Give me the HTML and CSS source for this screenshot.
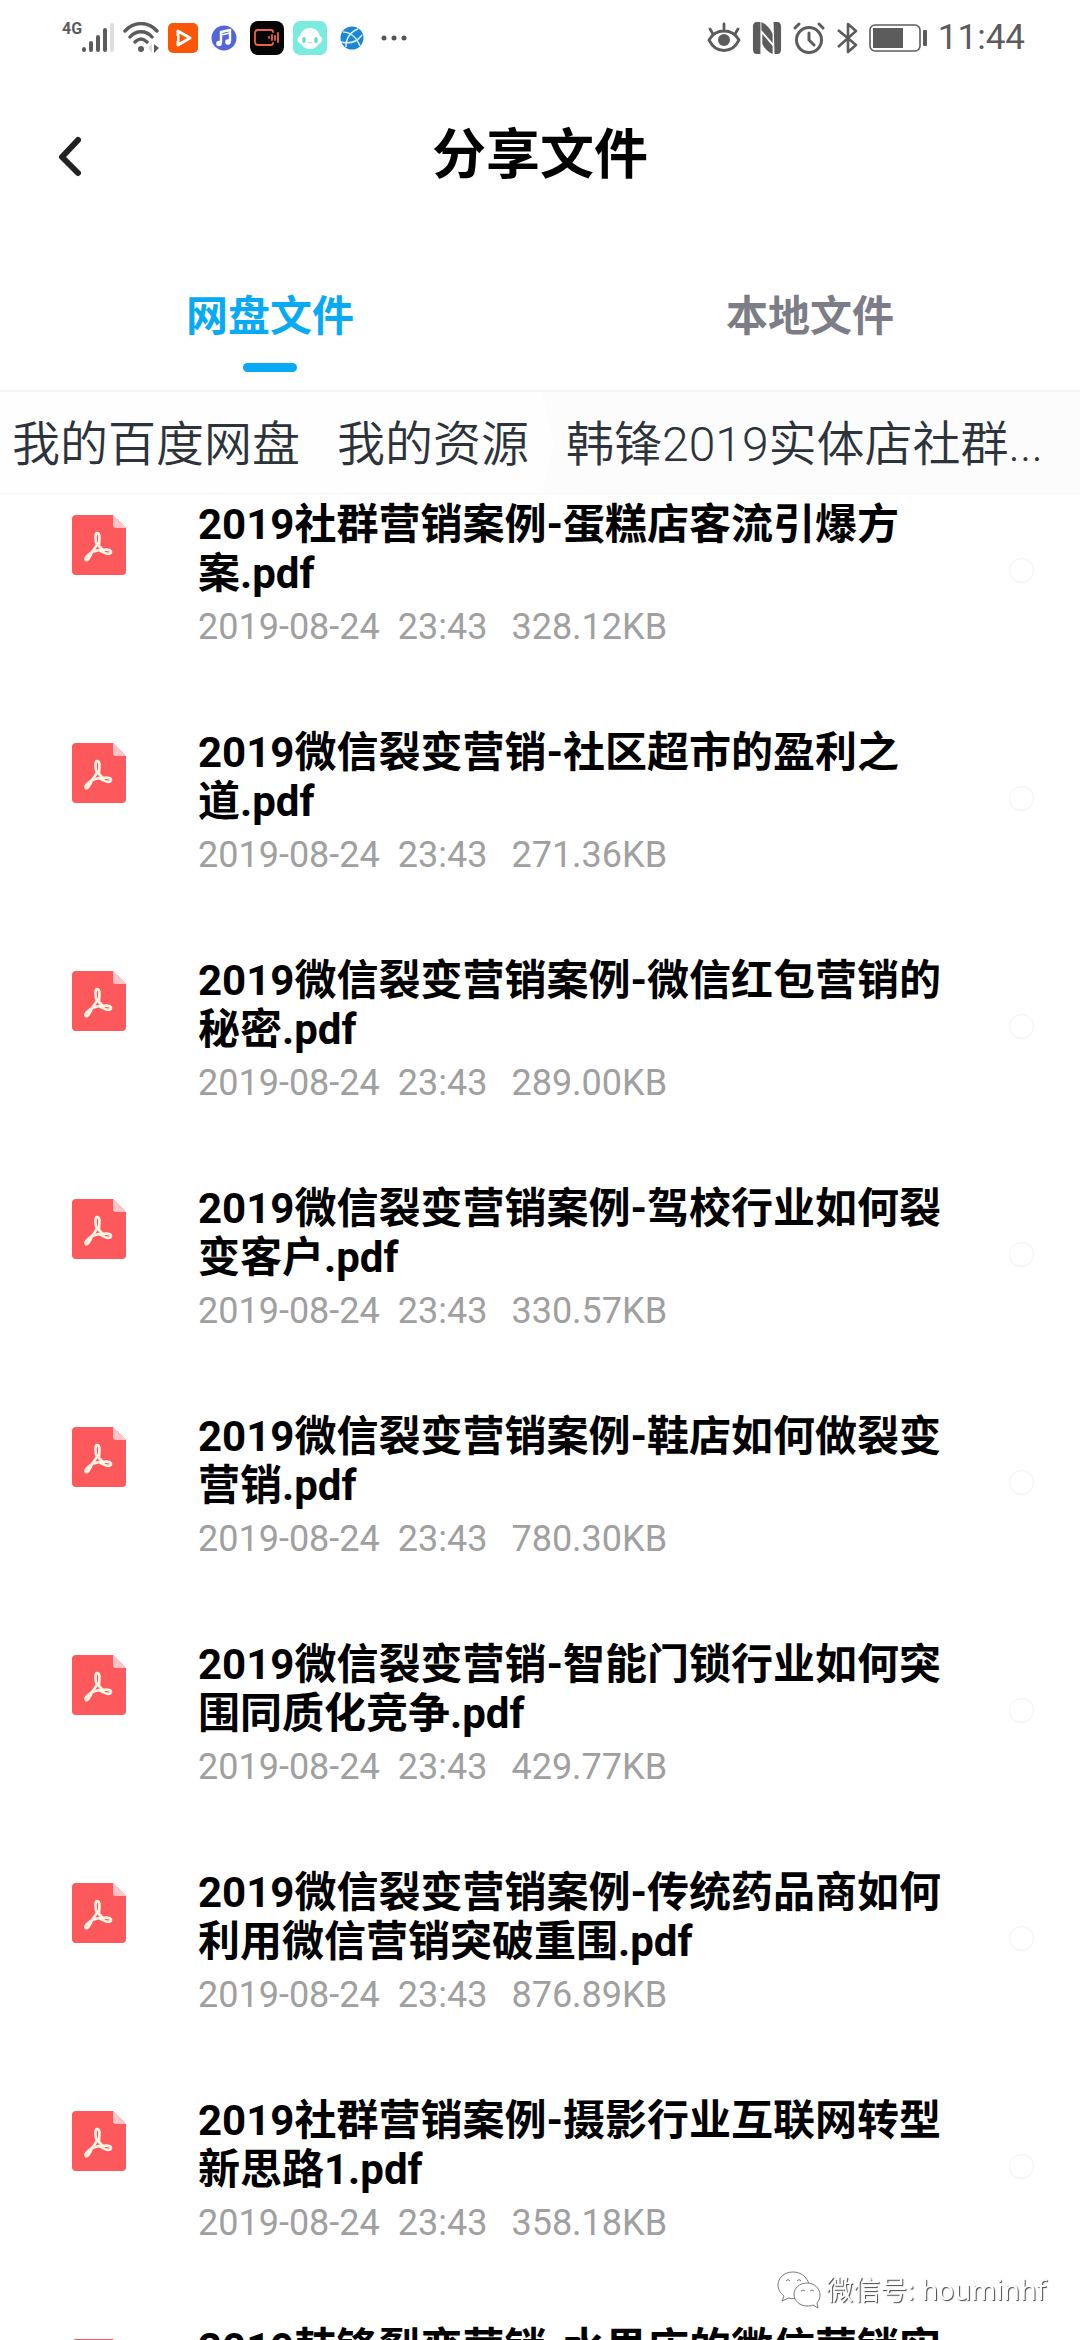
FILE: index.html
```
<!DOCTYPE html>
<html lang="zh-CN">
<head>
  <meta charset="UTF-8">
  <meta name="viewport" content="width=device-width, initial-scale=1.0">
  <title>分享文件</title>
  <link rel="stylesheet" href="styles.css">
</head>
<body>
  <!-- shared pdf icon -->
  <svg class="defs" width="0" height="0">
    <symbol id="pdf" viewBox="0 0 54 60">
      <path d="M4 0H41L54 13V56a4 4 0 0 1-4 4H4a4 4 0 0 1-4-4V4a4 4 0 0 1 4-4Z" fill="#fd595d"/>
      <path d="M41 0 54 13H44a3 3 0 0 1-3-3Z" fill="#ffc4c6"/>
      <path d="M25 18c4 0 2 8 2 13l4 4c4-1 8 0 8 2s-4 3-8 0l-4-2-7 2c-2 6-5 9-6 8-2-1 1-5 6-8l5-7c-2-4-2-12 0-12Z" fill="none" stroke="#fff5e6" stroke-width="2.6" stroke-linejoin="round"/>
    </symbol>
  </svg>

  <div class="status-bar">
    <div class="status-left">
      <div class="signal">
        <span class="network">4G</span>
        <svg width="32" height="32" viewBox="0 0 32 32" stroke-width="4" stroke-linecap="round" stroke="#5c5c5c">
          <path d="M2 27v1M9 21v7M16 15v13M23 8v20"/>
          <path d="M30 3v25" stroke="#dedede"/>
        </svg>
      </div>
      <svg class="wifi" width="36" height="32" viewBox="0 0 36 32" fill="none" stroke="#5c5c5c" stroke-width="3.4" stroke-linecap="round">
        <path d="M2 9C11 -1 25 -1 34 9M7 15c6-7 16-7 22 0M12 20c4-4 8-4 12 0"/>
        <circle cx="18" cy="27" r="3" fill="#5c5c5c" stroke="none"/>
        <path d="M31 22v9l5-5Z" fill="#5c5c5c" stroke="none"/>
        <path d="M29 22v9l-4-5Z" fill="#ddd" stroke="none"/>
      </svg>
      <svg class="app-video" width="30" height="32" viewBox="0 0 30 32">
        <rect y="1" width="30" height="30" rx="5" fill="#fb5607"/>
        <path d="M10 9v14l12-7Z" fill="none" stroke="#fff" stroke-width="3" stroke-linejoin="round"/>
        <path d="M8 14v5M14 14v4" stroke="#fb5607" stroke-width="2"/>
      </svg>
      <svg class="app-music" width="26" height="32" viewBox="0 0 26 32">
        <circle cx="13" cy="16" r="12.5" fill="#5266d8"/>
        <path d="M10 21V10l9-2v11" fill="none" stroke="#fff" stroke-width="2.4"/>
        <path d="M10 13l9-2" stroke="#fff" stroke-width="1.6"/>
        <circle cx="8" cy="21.5" r="2.8" fill="#fff"/>
        <circle cx="17" cy="20" r="2.8" fill="#fff"/>
      </svg>
      <svg class="app-record" width="34" height="34" viewBox="0 0 34 34">
        <rect width="34" height="34" rx="8" fill="#050505"/>
        <g fill="none" stroke="#ef6144" stroke-width="1.8" stroke-linecap="round" stroke-linejoin="round">
          <path d="M23 11c0-1-1-2-2-2H8c-2 0-3 1-3 3v9c0 2 1 3 3 3h13c1 0 2-1 2-2"/>
          <path d="M19 16v1M22 14v5M25 15v4M28 12v9"/>
        </g>
      </svg>
      <svg class="app-mint" width="34" height="34" viewBox="0 0 34 34">
        <rect width="34" height="34" rx="7" fill="#79ecdd"/>
        <path d="M17 7c6 0 9 4 10 8 3 2 3 6-1 8-2 3-5 5-9 5s-7-2-9-5c-5-2-4-7-1-8 1-4 4-8 10-8Z" fill="#fff"/>
        <ellipse cx="11" cy="19" rx="1.8" ry="3" fill="#6fd6cc"/>
        <ellipse cx="23" cy="19" rx="1.8" ry="3" fill="#6fd6cc"/>
        <path d="M15 21q2 2 4 0" fill="none" stroke="#8bdcd3"/>
      </svg>
      <svg class="app-globe" width="24" height="32" viewBox="0 0 24 32">
        <circle cx="12" cy="16" r="11.5" fill="#1d86d4"/>
        <g fill="none" stroke="#d5efff" stroke-width="1.5">
          <path d="M3 10c6 0 13 4 17 14M18 7c-8 3-12 9-12 18M1 20c8 2 16 0 21-7"/>
        </g>
      </svg>
      <svg class="more" width="26" height="32" viewBox="0 0 26 32" fill="#555">
        <circle cx="3" cy="16" r="2.5"/>
        <circle cx="13" cy="16" r="2.5"/>
        <circle cx="23" cy="16" r="2.5"/>
      </svg>
    </div>
    <div class="status-right">
      <svg width="34" height="32" viewBox="0 0 34 32" fill="none" stroke="#5c5c5c" stroke-width="2.8" stroke-linecap="round">
        <path d="M2 18C9 6 25 6 32 18 25 32 9 32 2 18ZM17 2v5M3 7l3 5M31 7l-3 5"/>
        <circle cx="17" cy="18" r="6" fill="#5c5c5c" stroke="none"/>
      </svg>
      <svg width="30" height="32" viewBox="0 0 32 32" preserveAspectRatio="none" fill="#5c5c5c">
        <path d="M5 0h4v32H5c-3 0-4-2-4-5V5c0-3 1-5 4-5ZM23 0h4c3 0 4 2 4 5v22c0 3-1 5-4 5h-3Z"/>
        <path d="M10 0c5 2 10 7 12 12v9L10 8ZM11 12l11 12v8c-5-2-9-6-11-10Z"/>
      </svg>
      <svg width="32" height="32" viewBox="0 0 32 32" fill="none" stroke="#5c5c5c" stroke-width="3" stroke-linecap="round">
        <circle cx="16" cy="18" r="12.5"/>
        <path d="M16 11v7l5 5M2 6l4-4M30 6l-4-4"/>
      </svg>
      <svg class="bluetooth" width="22" height="32" viewBox="0 0 22 32" fill="none" stroke="#5c5c5c" stroke-width="2.6" stroke-linejoin="round">
        <path d="M2 8 20 23 12 30V2l8 7L2 25"/>
      </svg>
      <svg class="battery" width="58" height="32" viewBox="0 0 58 32">
        <rect x="1" y="3" width="50" height="26" rx="5" fill="none" stroke="#5c5c5c" stroke-width="1.6"/>
        <rect x="4" y="6" width="30" height="20" fill="#5c5c5c"/>
        <rect x="54" y="8" width="4" height="16" rx="1" fill="#5c5c5c"/>
      </svg>
      <span class="clock">11:44</span>
    </div>
  </div>

  <header class="title-bar">
    <button class="back" type="button" aria-label="返回">
      <svg width="24" height="42" viewBox="0 0 24 42" fill="none" stroke="#222" stroke-width="6" stroke-linecap="round" stroke-linejoin="round">
        <path d="M20 5 4 22l16 16"/>
      </svg>
    </button>
    <h1>分享文件</h1>
  </header>

  <nav class="tabs">
    <button class="tab active" type="button">网盘文件</button>
    <button class="tab" type="button">本地文件</button>
  </nav>

  <nav class="breadcrumb">
    <a href="#">我的百度网盘</a>
    <a href="#">我的资源</a>
    <a class="current" href="#">韩锋2019实体店社群...</a>
  </nav>

  <main>
    <ul class="file-list">
      <li class="file">
        <svg class="file-icon"><use href="#pdf"/></svg>
        <div class="file-info">
          <label class="file-name" for="file1">2019社群营销案例-蛋糕店客流引爆方案.pdf</label>
          <div class="file-meta"><span>2019-08-24</span><span>23:43</span><span class="size">328.12KB</span></div>
        </div>
        <input class="check" type="checkbox" id="file1">
      </li>
      <li class="file">
        <svg class="file-icon"><use href="#pdf"/></svg>
        <div class="file-info">
          <label class="file-name" for="file2">2019微信裂变营销-社区超市的盈利之道.pdf</label>
          <div class="file-meta"><span>2019-08-24</span><span>23:43</span><span class="size">271.36KB</span></div>
        </div>
        <input class="check" type="checkbox" id="file2">
      </li>
      <li class="file">
        <svg class="file-icon"><use href="#pdf"/></svg>
        <div class="file-info">
          <label class="file-name" for="file3">2019微信裂变营销案例-微信红包营销的秘密.pdf</label>
          <div class="file-meta"><span>2019-08-24</span><span>23:43</span><span class="size">289.00KB</span></div>
        </div>
        <input class="check" type="checkbox" id="file3">
      </li>
      <li class="file">
        <svg class="file-icon"><use href="#pdf"/></svg>
        <div class="file-info">
          <label class="file-name" for="file4">2019微信裂变营销案例-驾校行业如何裂变客户.pdf</label>
          <div class="file-meta"><span>2019-08-24</span><span>23:43</span><span class="size">330.57KB</span></div>
        </div>
        <input class="check" type="checkbox" id="file4">
      </li>
      <li class="file">
        <svg class="file-icon"><use href="#pdf"/></svg>
        <div class="file-info">
          <label class="file-name" for="file5">2019微信裂变营销案例-鞋店如何做裂变营销.pdf</label>
          <div class="file-meta"><span>2019-08-24</span><span>23:43</span><span class="size">780.30KB</span></div>
        </div>
        <input class="check" type="checkbox" id="file5">
      </li>
      <li class="file">
        <svg class="file-icon"><use href="#pdf"/></svg>
        <div class="file-info">
          <label class="file-name" for="file6">2019微信裂变营销-智能门锁行业如何突围同质化竞争.pdf</label>
          <div class="file-meta"><span>2019-08-24</span><span>23:43</span><span class="size">429.77KB</span></div>
        </div>
        <input class="check" type="checkbox" id="file6">
      </li>
      <li class="file">
        <svg class="file-icon"><use href="#pdf"/></svg>
        <div class="file-info">
          <label class="file-name" for="file7">2019微信裂变营销案例-传统药品商如何利用微信营销突破重围.pdf</label>
          <div class="file-meta"><span>2019-08-24</span><span>23:43</span><span class="size">876.89KB</span></div>
        </div>
        <input class="check" type="checkbox" id="file7">
      </li>
      <li class="file">
        <svg class="file-icon"><use href="#pdf"/></svg>
        <div class="file-info">
          <label class="file-name" for="file8">2019社群营销案例-摄影行业互联网转型新思路1.pdf</label>
          <div class="file-meta"><span>2019-08-24</span><span>23:43</span><span class="size">358.18KB</span></div>
        </div>
        <input class="check" type="checkbox" id="file8">
      </li>
      <li class="file">
        <svg class="file-icon"><use href="#pdf"/></svg>
        <div class="file-info">
          <label class="file-name" for="file9">2019韩锋裂变营销-水果店的微信营销实</label>
        </div>
        <input class="check" type="checkbox" id="file9">
      </li>
    </ul>
  </main>

  <div class="watermark">
    <svg width="44" height="38" viewBox="0 0 44 38" fill="#fff" stroke="#777" stroke-width="1">
      <path d="M16 1C7 1 1 7 1 14c0 4 2 8 6 11l-2 5 7-3c3 1 5 1 8 0 9-1 13-7 12-14-2-7-8-12-16-12Z"/>
      <path d="M30 12c-7 0-13 5-13 11 0 7 6 12 13 12 2 0 4 0 6-1l5 3-1-5c2-2 3-5 3-8 0-7-6-12-13-12Z"/>
      <path d="M9 10q2-3 4 0M20 10q2-3 4 0M24 20q2-2 4 0M33 20q2-2 4 0" fill="none"/>
    </svg>
    <span>微信号: houminhf</span>
  </div>
</body>
</html>
```
FILE: styles.css
```
* {
  box-sizing: border-box;
}

body {
  margin: 0;
  height: 100vh;
  overflow: hidden;
  background-color: #fff;
  color: #000;
  font-family: Roboto, "Noto Sans CJK SC", sans-serif;
}

button {
  padding: 0;
  border: none;
  background: none;
  font-family: inherit;
}

svg {
  flex: none;
}

.defs {
  position: absolute;
}

/* status bar */
.status-bar {
  display: flex;
  justify-content: space-between;
  align-items: center;
  height: 76px;
  padding: 0 55px 0 62px;
}

.status-left,
.status-right,
.signal {
  display: flex;
  align-items: center;
}

.status-left {
  gap: 9px;
}

.status-right {
  gap: 11px;
}

.network {
  align-self: flex-start;
  color: #5c5c5c;
  font-size: 16px;
  font-weight: 700;
  line-height: 14px;
}

.app-music,
.app-globe {
  margin: 0 4px;
}

.more {
  margin-left: 4px;
}

.clock {
  color: #5c5c5c;
  font-size: 35px;
  font-weight: 400;
  line-height: 40px;
}

/* title bar */
.title-bar {
  display: grid;
  grid-template-columns: 1fr auto 1fr;
  align-items: center;
  height: 160px;
  padding: 0 58px;
}

.back {
  display: flex;
  justify-self: start;
}

.title-bar h1 {
  margin: 0;
  font-size: 54px;
  font-weight: 700;
  line-height: 80px;
}

/* tabs */
.tabs {
  display: flex;
  height: 156px;
  border-bottom: 2px solid #f3f3f3;
}

.tab {
  position: relative;
  flex: 1;
  padding-top: 7px;
  color: #7d7d87;
  font-size: 42px;
  font-weight: 700;
  line-height: 60px;
}

.tab.active {
  color: #09aaf5;
}

.tab.active::after {
  content: "";
  position: absolute;
  left: 50%;
  bottom: 18px;
  width: 54px;
  height: 9px;
  margin-left: -27px;
  border-radius: 5px;
  background-color: #09aaf5;
}

/* breadcrumb */
.breadcrumb {
  display: flex;
  align-items: center;
  height: 102px;
  padding-left: 12px;
  border-bottom: 1px solid #f7f7f7;
  background-color: #fefefe;
}

.breadcrumb a {
  margin-right: 37px;
  padding-top: 4px;
  color: #2d333b;
  font-size: 48px;
  font-weight: 350;
  line-height: 97px;
  text-decoration: none;
  white-space: nowrap;
}

.breadcrumb .current {
  flex: 1;
  margin: 0 0 0 -24px;
  padding-left: 24px;
  background-color: #fcfcfd;
  clip-path: polygon(0 0, 100% 0, 100% 100%, 0 100%, 12px 50%);
}

/* file list */
.file-list {
  display: flex;
  flex-direction: column;
  gap: 80px;
  margin: 0;
  padding: 6px 46px 0 72px;
  list-style: none;
}

.file {
  display: flex;
  align-items: flex-start;
}

.file-icon {
  width: 54px;
  height: 60px;
  margin-top: 15px;
}

.file-info {
  flex: 1;
  padding: 0 60px 0 72px;
}

.file-name {
  display: block;
  font-size: 42px;
  font-weight: 700;
  line-height: 49px;
}

.file-meta {
  display: flex;
  gap: 18px;
  margin-top: 8px;
  color: #a0a0a0;
  font-size: 36px;
  font-weight: 400;
  line-height: 42px;
}

.file-meta .size {
  margin-left: 6px;
}

.check {
  flex: none;
  width: 25px;
  height: 25px;
  margin: 58px 0 0;
  border: 1px solid #f2f2f2;
  border-radius: 50%;
  appearance: none;
}

/* watermark over the list */
.watermark {
  position: fixed;
  right: 34px;
  bottom: 30px;
  display: flex;
  align-items: center;
  gap: 5px;
  color: #fff;
  font-family: "Noto Sans", "Noto Sans CJK SC", sans-serif;
  font-size: 27px;
  font-weight: 400;
  line-height: 40px;
  text-shadow: 1px 1px 1px #444;
}
```
